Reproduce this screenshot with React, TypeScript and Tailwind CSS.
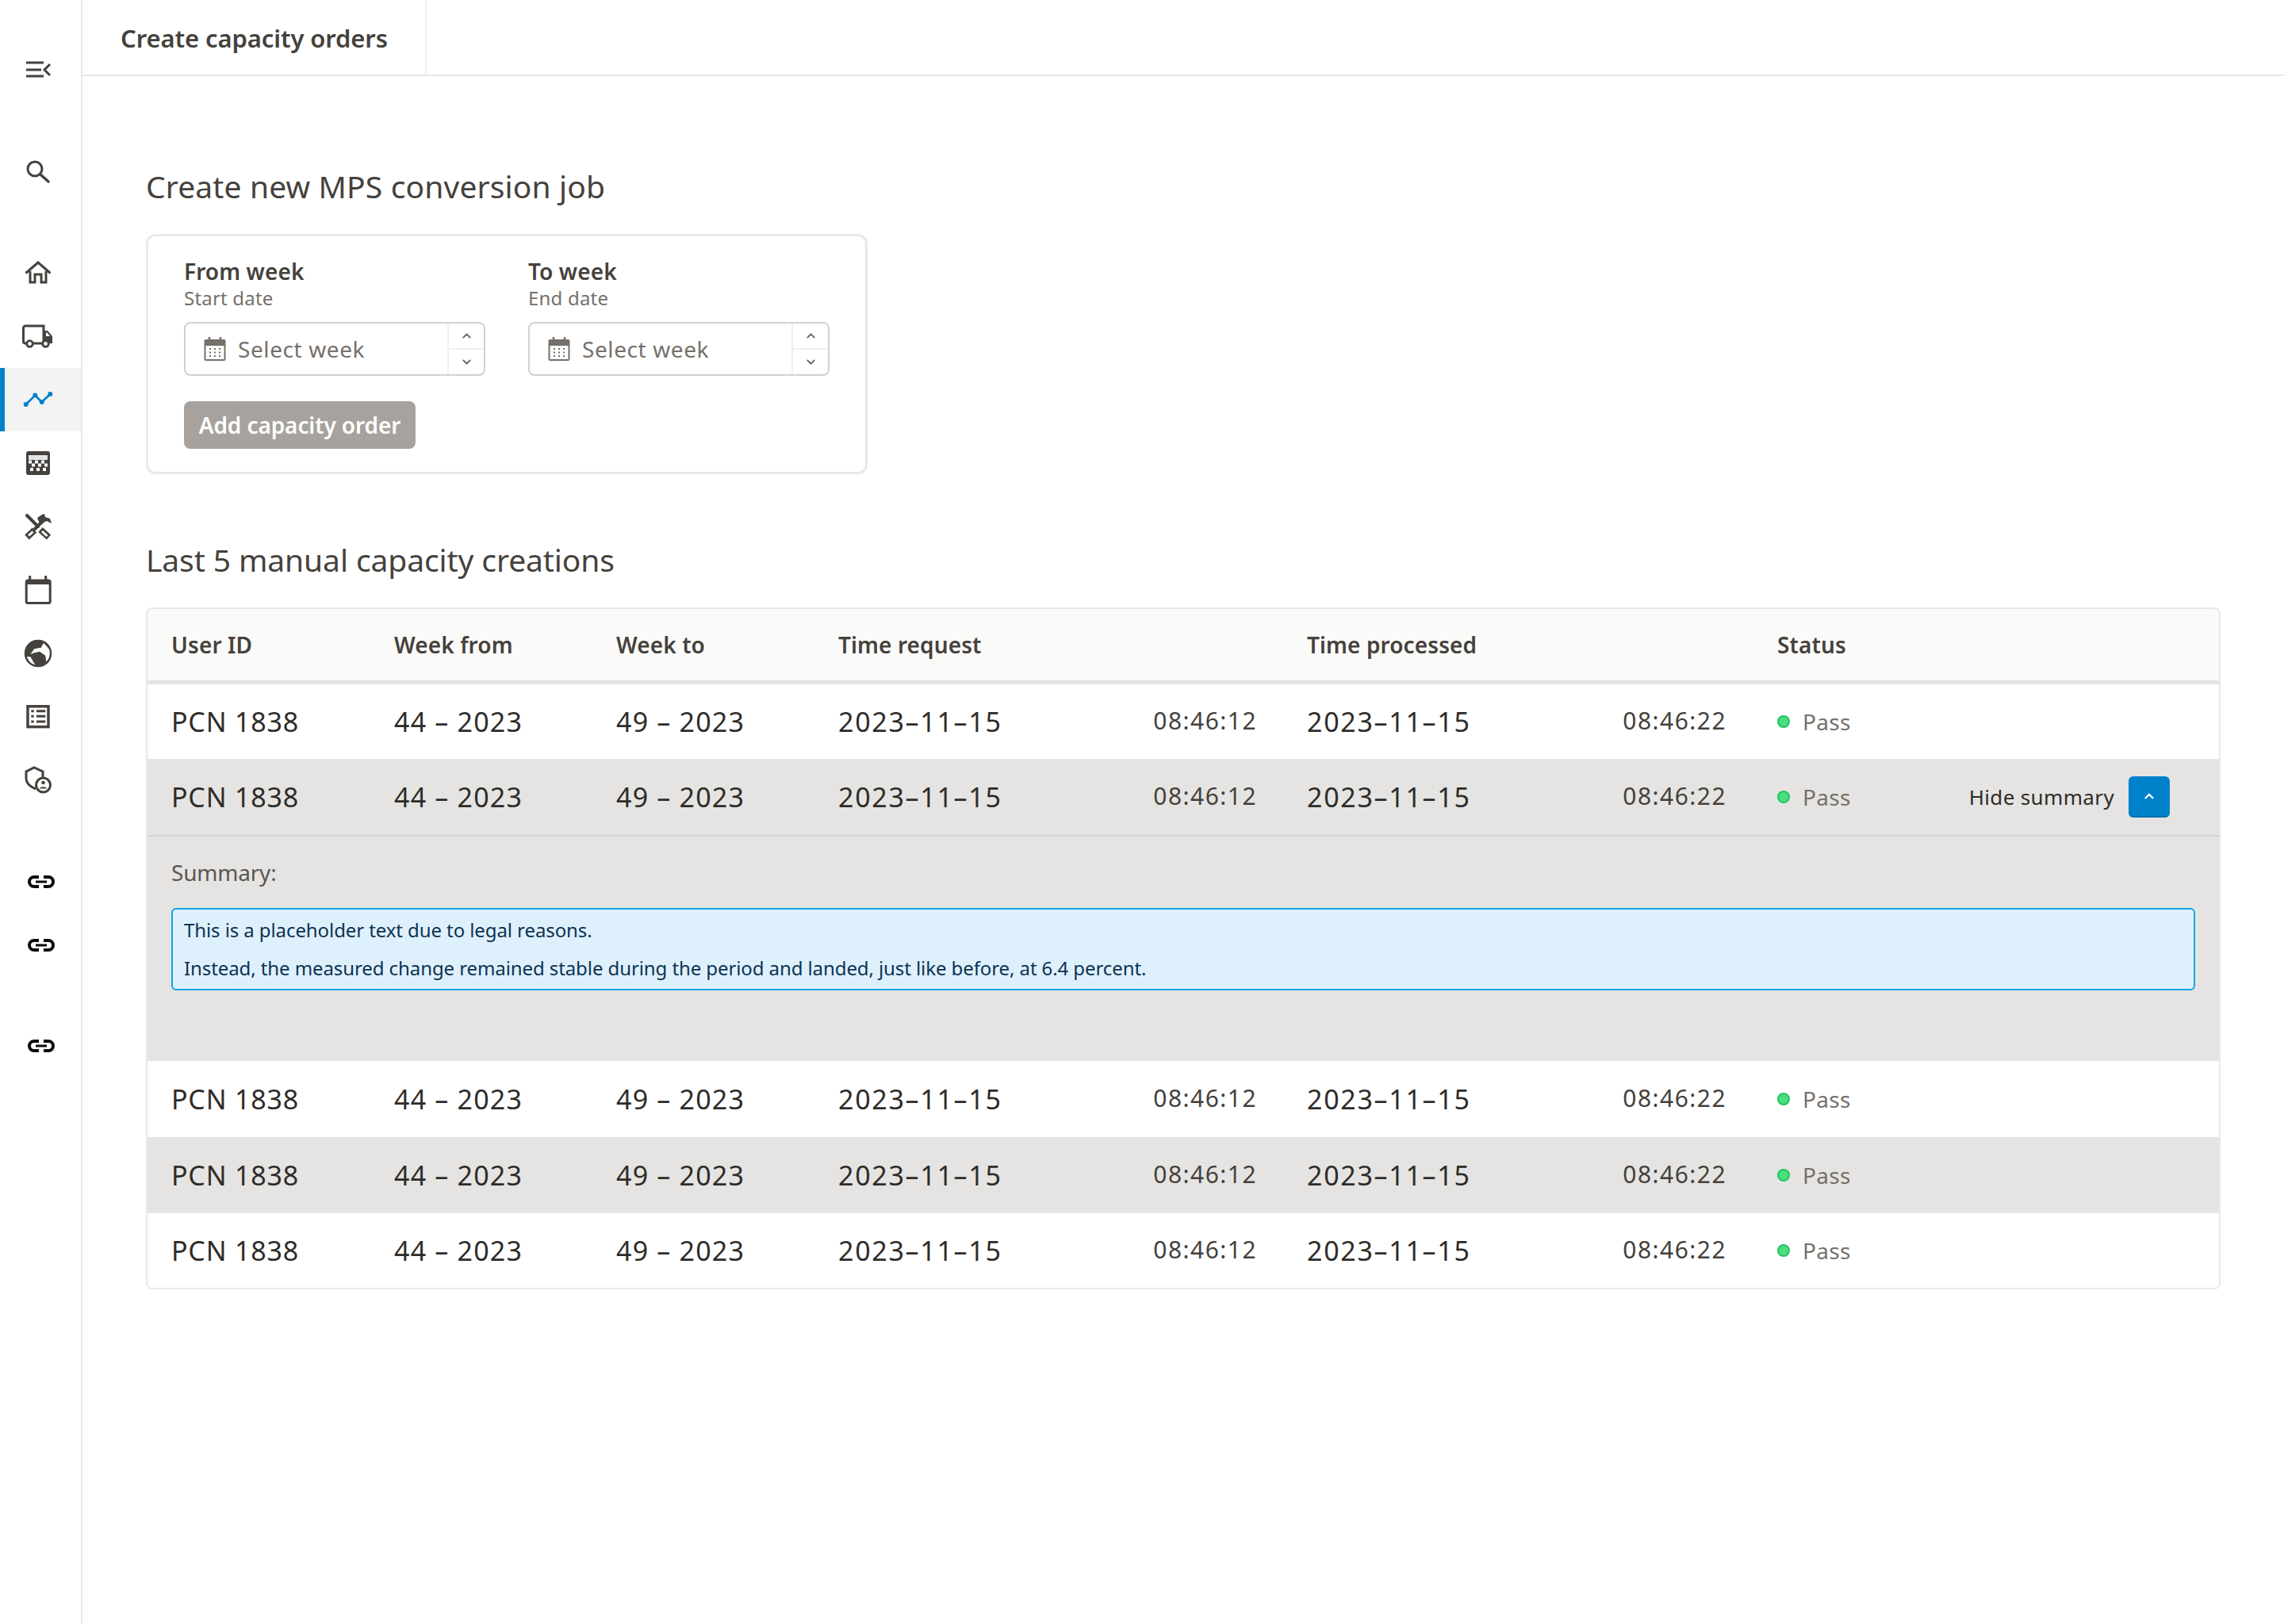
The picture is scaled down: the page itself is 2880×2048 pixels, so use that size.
import React from 'react';
import { ChevronUp, ChevronDown } from 'lucide-react';

const ink = '#45413c';

function Icon({ children }: { children: React.ReactNode }) {
  return (
    <svg width="40" height="40" viewBox="0 0 40 40" fill="none">
      {children}
    </svg>
  );
}

const MenuIcon = () => (
  <Icon>
    <path d="M5 11h22M5 20h19M5 28h22" stroke={ink} strokeWidth="3" />
    <path d="M35 13l-7 7 7 7" stroke={ink} strokeWidth="3" />
  </Icon>
);
const SearchIcon = () => (
  <Icon>
    <circle cx="16" cy="17" r="9" stroke={ink} strokeWidth="3" />
    <path d="M23 24l10 9" stroke={ink} strokeWidth="3.4" strokeLinecap="round" />
  </Icon>
);
const HomeIcon = () => (
  <Icon>
    <path d="M4.500 20.500L20 7l15.500 13.500" stroke={ink} strokeWidth="3" />
    <path d="M10 18v14h6V22h8v10h6V18" stroke={ink} strokeWidth="3" />
  </Icon>
);
const TruckIcon = () => (
  <Icon>
    <path d="M6 29H4a2.500 2.500 0 0 1-2.500-2.500v-17A2.500 2.500 0 0 1 4 7h23v22H14" stroke={ink} strokeWidth="3" />
    <path d="M27 13h5l6 7v9H27z" fill={ink} />
    <path d="M30 15.500h1.500l3.500 4.500h-5z" fill="#fff" />
    <circle cx="9.500" cy="29.500" r="3.800" fill="#fff" stroke={ink} strokeWidth="2.800" />
    <circle cx="29.500" cy="29.500" r="3.800" fill="#fff" stroke={ink} strokeWidth="2.800" />
  </Icon>
);
const ChartIcon = () => (
  <Icon>
    <path d="M4.700 26l11.600-11.400 8.400 8.400L35.300 13" stroke="#0082ca" strokeWidth="2.800" />
    <circle cx="4.700" cy="26" r="3" fill="#0082ca" />
    <circle cx="16.300" cy="14.600" r="3" fill="#0082ca" />
    <circle cx="24.700" cy="23" r="3" fill="#0082ca" />
    <circle cx="35.300" cy="13" r="3" fill="#0082ca" />
  </Icon>
);
const CalcIcon = () => (
  <Icon>
    <rect x="5" y="5" width="30" height="30" rx="3" fill={ink} />
    <rect x="8" y="10" width="24" height="6" fill="#fff" opacity=".85" />
    <path d="M8 16.500h4v4H8zm8 0h4v4h-4zm8 0h4v4h-4zM12 20.500h4v4h-4zm8 0h4v4h-4zm8 0h4v4h-4zM10 26h4v4h-4zm8 0h4v4h-4zm8 0h4v4h-4z" fill="#fff" />
  </Icon>
);
const ToolsIcon = () => (
  <Icon>
    <path d="M6 6l14 14" stroke={ink} strokeWidth="4" strokeLinecap="round" />
    <path d="M23 24l10.500 9.500" stroke={ink} strokeWidth="8" />
    <path d="M25 26l6.500 6" stroke="#fff" strokeWidth="3" />
    <path d="M25 14l-10 10" stroke={ink} strokeWidth="4" />
    <path d="M15.500 24.500L6 33.500" stroke={ink} strokeWidth="8" />
    <path d="M13.500 26.500l-5.500 5" stroke="#fff" strokeWidth="3" />
    <path d="M19 9l6-4 3-1 1 4 6 2 2 6-6-3-4 2-3 3-3-4z" fill={ink} />
  </Icon>
);
const CalendarIcon = () => (
  <Icon>
    <path d="M9.700 2v6M29.700 2v6" stroke={ink} strokeWidth="3" />
    <rect x="5.200" y="8" width="30" height="28.500" rx="2" stroke={ink} strokeWidth="3" />
    <rect x="5.200" y="7" width="30" height="6" fill={ink} />
  </Icon>
);
const GlobeIcon = () => (
  <Icon>
    <circle cx="20" cy="20" r="17" fill={ink} />
    <path d="M27 6.700l8.300 9.300-.6 10-4.400 5-1-8.300-7.300-5-6.700 1.600-5 1.700 5-6.700 8.400-1.600z" fill="#fff" />
    <path d="M5.300 24.300h5l5 8.400 1.700 2.600-6.700-2.600z" fill="#fff" />
    <circle cx="20" cy="20" r="16" stroke={ink} strokeWidth="2.400" />
  </Icon>
);
const ListIcon = () => (
  <Icon>
    <rect x="7" y="6.800" width="26" height="25.800" stroke={ink} strokeWidth="3.500" />
    <path d="M11.300 11.200h3.400v3h-3.400zM11.300 17.800h3.400v3h-3.400zM11.300 24.500h3.400v3h-3.400z" fill={ink} />
    <path d="M18 12.700h11.300M18 19.300h11.300M18 26h11.300" stroke={ink} strokeWidth="3" />
  </Icon>
);
const ShieldIcon = () => (
  <Icon>
    <path d="M26 17V9L15 3.800 5 9v9c0 6 5 10 12 13" stroke={ink} strokeWidth="3" />
    <circle cx="26.500" cy="26" r="9" fill="#fff" stroke={ink} strokeWidth="3" />
    <circle cx="26.500" cy="23" r="2.300" fill={ink} />
    <path d="M22 30.500c.5-3 8.500-3 9 0z" fill={ink} />
  </Icon>
);
const LinkIcon = () => (
  <svg width="40" height="40" viewBox="0 0 40 40" fill="none">
    <path d="M17 14h-6a6 6 0 0 0 0 12h6M23 14h6a6 6 0 0 1 0 12h-6" stroke="#0b0b0b" strokeWidth="4" />
    <path d="M13 20h14" stroke="#0b0b0b" strokeWidth="3" />
  </svg>
);

const CalendarSmall = () => (
  <svg width="28" height="31" viewBox="0 0 28 31" fill="none" className="shrink-0">
    <path d="M7 0v4M21 0v4" stroke="#76706a" strokeWidth="2.500" />
    <rect x="0.500" y="3" width="27" height="27" rx="2" fill="#76706a" />
    <rect x="2.500" y="11" width="23" height="17" fill="#fff" />
    <path d="M7 14h2v2H7zm6 0h2v2h-2zm6 0h2v2h-2zM7 18.500h2v2H7zm6 0h2v2h-2zm6 0h2v2h-2zM7 23h2v2H7zm6 0h2v2h-2zm6 0h2v2h-2z" fill="#76706a" />
  </svg>
);

function NavItem({ active, children, className }: { active?: boolean; children: React.ReactNode; className?: string }) {
  return (
    <div className={`flex h-[80px] items-center justify-center ${active ? 'border-l-[6px] border-[#0082ca] bg-[#f3f3f2]' : ''} ${className ?? 'pr-[6px]'}`}>
      {children}
    </div>
  );
}

function WeekField({ label, hint }: { label: string; hint: string }) {
  return (
    <div className="w-[380px]">
      <div className="text-[28px] leading-[36px] font-semibold tracking-[0.1px] text-[#45413c]">{label}</div>
      <div className="mt-[1px] text-[24px] leading-[30px] tracking-[0.2px] text-[#76706a]">{hint}</div>
      <div className="mt-[15px] flex h-[68px] rounded-[8px] border-2 border-[#d4d1cd] bg-white">
        <div className="flex flex-1 items-center gap-[15px] pl-[23px]">
          <CalendarSmall />
          <span className="text-[28px] tracking-[0.6px] text-[#76706a]">Select week</span>
        </div>
        <div className="flex w-[46px] flex-col border-l-2 border-[#f1f0ef]">
          <div className="flex flex-1 items-center justify-center border-b-2 border-[#f1f0ef]">
            <ChevronUp size={17} color="#5b5650" strokeWidth={2.2} />
          </div>
          <div className="flex flex-1 items-center justify-center">
            <ChevronDown size={17} color="#5b5650" strokeWidth={2.2} />
          </div>
        </div>
      </div>
    </div>
  );
}

function Row({ shaded, open, h = 'h-[96px]' }: { shaded?: boolean; open?: boolean; h?: string }) {
  return (
    <div className={`grid grid-cols-[281px_280px_280px_591px_593px_1fr] items-center pl-[30px] pr-[62px] text-[34px] text-[#2f2c29] ${h} ${shaded ? 'bg-[#e5e4e2]' : 'bg-white'}`}>
      <div className="tracking-[0.8px]">PCN 1838</div>
      <div className="tracking-[1.2px]">44 – 2023</div>
      <div className="tracking-[1.2px]">49 – 2023</div>
      <div className="flex items-center justify-between pr-[63px]">
        <span className="tracking-[1.7px]">2023–11–15</span>
        <span className="pb-[3px] text-[30px] tracking-[1.45px] text-[#45413c]">08:46:12</span>
      </div>
      <div className="flex items-center justify-between pr-[64px]">
        <span className="tracking-[1.7px]">2023–11–15</span>
        <span className="pb-[3px] text-[30px] tracking-[1.45px] text-[#45413c]">08:46:22</span>
      </div>
      <div className="flex items-center">
        <span className="h-[16px] w-[16px] rounded-full border-2 border-[#22c55e] bg-[#4ade80]" />
        <span className="ml-[16px] text-[28px] tracking-[0.3px] text-[#76706a]">Pass</span>
        {open && (
          <div className="ml-auto flex items-center gap-[18px]">
            <span className="text-[26px] tracking-[0.35px] text-[#2f2c29]">Hide summary</span>
            <button className="flex h-[52px] w-[52px] items-center justify-center rounded-[6px] border-b-2 border-[#0070ad] bg-[#0082ca]">
              <ChevronUp size={18} color="#fff" strokeWidth={3} />
            </button>
          </div>
        )}
      </div>
    </div>
  );
}

export default function App() {
  return (
    <div className="flex min-h-[2048px] bg-white font-['Noto_Sans','Open_Sans',sans-serif] text-[#45413c]">
      <aside className="flex w-[104px] shrink-0 flex-col border-r-2 border-[#e8e8e8] pt-[48px]">
        <NavItem><MenuIcon /></NavItem>
        <NavItem className="mt-[48px] pr-[6px]"><SearchIcon /></NavItem>
        <NavItem className="mt-[48px] pr-[6px]"><HomeIcon /></NavItem>
        <NavItem><TruckIcon /></NavItem>
        <NavItem active className="pr-[12px]"><ChartIcon /></NavItem>
        <NavItem><CalcIcon /></NavItem>
        <NavItem><ToolsIcon /></NavItem>
        <NavItem><CalendarIcon /></NavItem>
        <NavItem><GlobeIcon /></NavItem>
        <NavItem><ListIcon /></NavItem>
        <NavItem><ShieldIcon /></NavItem>
        <NavItem className="mt-[48px] pl-[2px]"><LinkIcon /></NavItem>
        <NavItem className="pl-[2px]"><LinkIcon /></NavItem>
        <NavItem className="mt-[47px] pl-[2px]"><LinkIcon /></NavItem>
      </aside>

      <main className="flex-1">
        <header className="flex h-[96px] border-b-2 border-[#e8e8e8]">
          <div className="flex w-[434px] items-center border-r-2 border-[#f1f1f1] pl-[48px] pt-[2px] text-[31px] font-semibold tracking-[-0.1px] text-[#45413c]">
            Create capacity orders
          </div>
        </header>

        <div className="pl-[80px] pr-[80px]">
          <h2 className="mt-[112px] text-[39px] leading-[54px] font-normal tracking-[0.13px] text-[#45413c]">Create new MPS conversion job</h2>
          <section className="mt-[33px] h-[303px] w-[910px] rounded-[12px] border-[3px] border-[#ebe9e7] pl-[45px] pt-[26px]">
            <div className="flex gap-[54px]">
              <WeekField label="From week" hint="Start date" />
              <WeekField label="To week" hint="End date" />
            </div>
            <button className="mt-[32px] h-[60px] w-[292px] rounded-[8px] bg-[#a7a29d] text-[28px] font-semibold tracking-[-0.1px] text-white">
              Add capacity order
            </button>
          </section>

          <h2 className="mt-[81px] text-[39px] leading-[54px] font-normal tracking-[-0.1px] text-[#45413c]">Last 5 manual capacity creations</h2>
          <section className="mt-[33px] w-[2616px] overflow-hidden rounded-[8px] border-2 border-[#e8e8e8]">
            <div className="grid h-[95px] grid-cols-[281px_280px_280px_591px_593px_1fr] items-center border-b-[5px] border-[#e5e4e2] bg-[#fafaf8] pl-[30px] text-[28px] font-semibold tracking-[0.1px] text-[#45413c]">
              <div>User ID</div>
              <div>Week from</div>
              <div>Week to</div>
              <div>Time request</div>
              <div>Time processed</div>
              <div>Status</div>
            </div>
            <Row h="h-[94px]" />
            <Row shaded open h="h-[98px] border-b-2 border-[#d4d2cf]" />
            <div className="h-[283px] bg-[#e5e4e2] px-[30px]">
              <div className="pt-[26px] text-[28px] leading-[38px] tracking-[-0.2px] text-[#5b5650]">Summary:</div>
              <div className="mt-[26px] flex h-[104px] flex-col justify-center gap-[18px] rounded-[6px] border-2 border-[#0ea5e9] bg-[#dff0fd] pl-[14px] text-[24px] leading-[30px] tracking-[-0.09px] text-[#0b3352]">
                <p>This is a placeholder text due to legal reasons.</p>
                <p>Instead, the measured change remained stable during the period and landed, just like before, at 6.4 percent.</p>
              </div>
            </div>
            <Row />
            <Row shaded />
            <Row h="h-[94px]" />
          </section>
        </div>
      </main>
    </div>
  );
}
